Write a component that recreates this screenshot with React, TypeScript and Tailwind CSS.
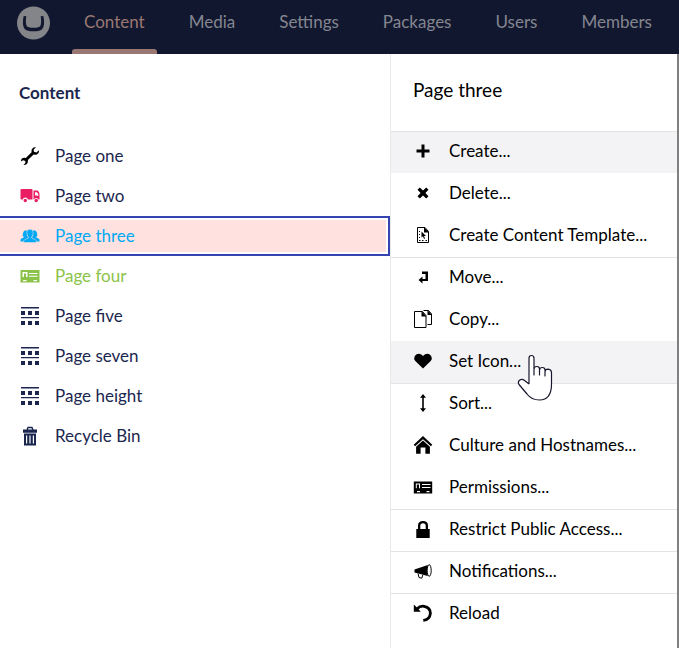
import type { ReactNode } from "react";

const navItems = ["Content", "Media", "Settings", "Packages", "Users", "Members"];

function Icon({ children }: { children: ReactNode }) {
  return (
    <svg viewBox="0 0 20 20" className="h-5 w-5 shrink-0" fill="currentColor" aria-hidden="true">
      {children}
    </svg>
  );
}

const wrench = (
  <Icon>
    <path d="M19 4.2 16.4 6.4 14 5.8 13.6 3.7 15.9 1.3C13.5.7 11.2 2.6 11.5 5.2L11.6 6.3 5.8 12 4.5 11.8C2.3 11.6.8 13.3 1 15.5L3.1 14.2 5.3 15 5.4 17 3.5 19C6 19.3 8 17.6 7.9 15.3L7.9 14 13.6 8.5 15 8.7C17.4 8.9 19.4 6.7 19 4.2Z" />
  </Icon>
);

const truck = (
  <Icon>
    <path d="M1.500 3H11.500Q12.500 3 12.500 4V13.500H7.900A2.600 2.600 0 0 0 2.800 13.500H1.500Q.500 13.500 .500 12.500V4Q.500 3 1.500 3Z" />
    <path fillRule="evenodd" d="M13.500 4.500H17.500Q19.500 5.500 19.500 8V13.500H18.600A2.600 2.600 0 0 0 13.800 13.500H13.500ZM15 6.300V9.300L18.300 10V8L17 6.300Z" />
    <circle cx="5.300" cy="14.500" r="1.700" />
    <circle cx="16.200" cy="14.500" r="1.700" />
  </Icon>
);

const users = (
  <Icon>
    <path d="M5 4.500Q7.300 3.800 7.500 6L7 9.200 8.300 11.400 4.500 15.500H.500V13.500Q1 12.600 3.700 11.500 4.300 10.800 2.600 9.800 3 5 5 4.500Z" />
    <path d="M15 4.500Q12.700 3.800 12.500 6L13 9.200 11.700 11.400 15.500 15.500H19.500V13.500Q19 12.600 16.300 11.500 15.700 10.800 17.400 9.800 17 5 15 4.500Z" />
    <path d="M10 3.300Q13.600 3.300 13.200 7L12.700 9.300 11.700 11.200V12L15.500 13.800Q16.500 14.400 16.500 16.500H3.500Q3.500 14.400 4.500 13.800L8.300 12V11.200L7.300 9.300 6.800 7Q6.400 3.300 10 3.300Z" stroke="#ffe2df" strokeWidth=".5" />
  </Icon>
);

const idCard = (
  <Icon>
    <path
      fillRule="evenodd"
      d="M.500 4H19.500V16.500H.500ZM2.500 6V11H4V7.500H6V11H7.500V6ZM9 7V8H17.500V7ZM9 9.700V10.700H17.500V9.700ZM3 14V15.300H6.500V14ZM13.500 14V15.300H17V14Z"
    />
  </Icon>
);

const grid = (
  <Icon>
    <path d="M1 1H19V2.500H1ZM1 5H5V9H1ZM8 5H12V9H8ZM15 5H19V9H15ZM1 11H19V12.300H1ZM1 15H5V19H1ZM8 15H12V19H8ZM15 15H19V19H15Z" />
  </Icon>
);

const trash = (
  <Icon>
    <path
      fillRule="evenodd"
      d="M3 3.500H6.500L7.500.800H12.500L13.500 3.500H17V6.700H3ZM8 3.500H12L11.600 2.300H8.400ZM4 7.500H16V19.500H4ZM6 9.500V17.500H7.200V9.500ZM9.400 9.500V17.500H10.600V9.500ZM12.800 9.500V17.500H14V9.500Z"
    />
  </Icon>
);

type Row = { label: string; icon: ReactNode; iconColor: string; textColor: string; selected?: boolean };

const pages: Row[] = [
  { label: "Page one", icon: wrench, iconColor: "text-black", textColor: "text-[#1b264f]" },
  { label: "Page two", icon: truck, iconColor: "text-[#e91e63]", textColor: "text-[#1b264f]" },
  { label: "Page three", icon: users, iconColor: "text-[#03a9f4]", textColor: "text-[#03a9f4]", selected: true },
  { label: "Page four", icon: idCard, iconColor: "text-[#8bc34a]", textColor: "text-[#8bc34a]" },
  { label: "Page five", icon: grid, iconColor: "text-[#1b264f]", textColor: "text-[#1b264f]" },
  { label: "Page seven", icon: grid, iconColor: "text-[#1b264f]", textColor: "text-[#1b264f]" },
  { label: "Page height", icon: grid, iconColor: "text-[#1b264f]", textColor: "text-[#1b264f]" },
  { label: "Recycle Bin", icon: trash, iconColor: "text-[#1b264f]", textColor: "text-[#1b264f]" },
];

type Action = { label: string; icon: ReactNode; divider?: boolean; shaded?: boolean; pointer?: boolean };

const actions: Action[] = [
  {
    label: "Create...",
    divider: true,
    shaded: true,
    icon: <path d="M8.500 3.500H11.500V8.500H16.500V11.500H11.500V16.500H8.500V11.500H3.500V8.500H8.500Z" />,
  },
  {
    label: "Delete...",
    icon: <path d="M4.500 6.800 6.800 4.500 10 7.600 13.200 4.500 15.500 6.800 12.400 10 15.500 13.200 13.200 15.500 10 12.400 6.800 15.500 4.500 13.200 7.600 10Z" />,
  },
  {
    label: "Create Content Template...",
    icon: (
      <>
        <path d="M4.500 2.500H12L15.500 6.500V17.500H4.500Z" fill="none" stroke="currentColor" strokeWidth="1" />
        <path d="M11 2V7.500H16ZM8.500 6.500V12.500L10 11.300 11 14 12 13.600 11 11H13ZM6 6H7V7H6ZM6 9H7V10H6ZM6 12H7V13H6ZM6 15H7.500V16H6ZM9 15H10.500V16H9ZM12.500 15H14V16H12.500Z" />
      </>
    ),
  },
  {
    label: "Move...",
    divider: true,
    icon: <path d="M9 4.500H15V14H9.500V16.500L5.500 13 9.500 9.500V12H12.500V7H9Z" />,
  },
  {
    label: "Copy...",
    icon: (
      <>
        <path d="M1.500 2.500H9.500L13 6.500V18.500H1.500Z M10.500 1.500H15.500L18.500 5V15.500H14.500" fill="none" stroke="currentColor" strokeWidth="1" />
        <path d="M8.500 2V7.500H13.500ZM14.500 1V6H19Z" />
      </>
    ),
  },
  {
    label: "Set Icon...",
    shaded: true,
    pointer: true,
    icon: <path d="M10 17.500 2.300 10Q.400 7.500 1.800 5 4.500 1.500 8.300 3.500L10 5 11.700 3.500Q15.500 1.500 18.200 5 19.600 7.500 17.700 10Z" />,
  },
  {
    label: "Sort...",
    divider: true,
    icon: <path d="M10 1 13 4.700H10.800V15.300H13L10 19 7 15.300H9.200V4.700H7Z" />,
  },
  {
    label: "Culture and Hostnames...",
    icon: (
      <>
        <path d="M10 1 19.300 9.800 17.900 11.300 10 4.200 2.100 11.300.700 9.800Z" />
        <path d="M10 5.600 16.900 11.800V18.700H12.400V12.500H7.600V18.700H3.100V11.800Z" />
      </>
    ),
  },
  {
    label: "Permissions...",
    icon: (
      <path
        fillRule="evenodd"
        d="M.800 4.500H19.200V16.500H.800ZM2.800 6.500V11.200H3.800V7.500H6V11.200H7V6.500ZM9 7V8H17.500V7ZM9 10V11H17.500V10ZM4 14V15.300H7V14ZM13.500 14V15.300H16.500V14Z"
      />
    ),
  },
  {
    label: "Restrict Public Access...",
    divider: true,
    icon: <path fillRule="evenodd" d="M3.300 10H5V6.500Q5 2 10 2T15 6.500V10H16.700V19H3.300ZM7.300 10H12.700V7Q12.700 4.200 10 4.200T7.300 7Z" />,
  },
  {
    label: "Notifications...",
    divider: true,
    icon: (
      <>
        <path d="M1.500 8.500 14.800 4Q13 9.500 14.800 15L1.500 11.500Z" />
        <ellipse cx="16.200" cy="9.500" rx="2" ry="5.800" fill="none" stroke="currentColor" strokeWidth="1" />
        <path d="M5 12.500 6 16.500 8.800 17.200 9.800 14" fill="none" stroke="currentColor" strokeWidth="1" />
      </>
    ),
  },
  {
    label: "Reload",
    divider: true,
    icon: (
      <>
        <path d="M4 6Q7 2.700 11 3.300 17.500 4.600 17.400 10.300 16.800 16.500 10.300 17.400" fill="none" stroke="currentColor" strokeWidth="2.800" />
        <path d="M.800 1.500 2.900 3.600 7.800 8.700H.800Z" />
      </>
    ),
  },
];

function HandCursor() {
  return (
    <svg viewBox="0 0 36 48" className="absolute top-3 left-[126px] z-10 h-12 w-9" aria-hidden="true">
      <path
        d="M12 31V5.500Q12 2.500 14.500 2.500T17 5.500V22V16.500Q17 13.500 19.800 13.500T22.500 16.500V22V17.500Q22.500 14.500 25.300 14.500T28 17.500V23V19Q28 16.200 31 16.200 34.500 16.500 34.500 20V31Q34.500 47 22.500 47 14.500 47 10 41L2 31.500Q.500 29 2.500 27.200 5 25.500 7.500 27.500L12 31"
        fill="white"
        stroke="#16162c"
        strokeWidth="1.200"
        strokeLinejoin="round"
      />
    </svg>
  );
}

export default function App() {
  return (
    <div className="flex min-h-screen flex-col bg-white font-['Lato',sans-serif] text-[17px] leading-6">
      <header className="flex h-[54px] items-stretch bg-[#11172f]">
        <a href="#home" aria-label="Home" className="flex w-[72px] items-center pb-2 pl-4">
          <svg viewBox="0 0 34 34" className="h-[34px] w-[34px]" aria-hidden="true">
            <circle cx="17.500" cy="17" r="16.500" fill="#848589" />
            <path
              d="M7.700 10Q5.700 18.500 8.700 23 10.700 25.300 17.500 25.300T26.300 23Q29.300 18.500 27.300 10L24.700 10.300Q25.800 17 24.300 20 23.300 21.800 17.500 21.800T10.700 20Q9.200 17 10.300 10.300Z"
              fill="#11172f"
            />
          </svg>
        </a>
        <nav className="flex gap-5">
          {navItems.map((item, i) => (
            <a
              key={item}
              href={`#${item.toLowerCase()}`}
              className={`relative flex items-center px-3 pb-2.5 ${i === 0 ? "text-[#9b7774]" : "text-[#84868f]"}`}
            >
              {item}
              {i === 0 && <span className="absolute inset-x-0 bottom-0 h-[5px] rounded-t-[3px] bg-[#9b7774]" />}
            </a>
          ))}
        </nav>
      </header>

      <main className="flex flex-1">
        <section className="flex-1">
          <h1 className="px-[19px] pt-[27px] pb-[31px] font-bold text-[#1b264f]">Content</h1>
          <ul>
            {pages.map((page) => (
              <li key={page.label}>
                <a
                  href="#page"
                  className={`flex h-10 items-center gap-[15px] border-y-2 border-r-2 pl-5 ${page.textColor} ${
                    page.selected
                      ? "border-[#3544b1] bg-[#ffe2df] shadow-[inset_-2px_0_white,inset_0_2px_white,inset_0_-2px_white]"
                      : "border-transparent"
                  }`}
                >
                  <span className={page.iconColor}>{page.icon}</span>
                  {page.label}
                </a>
              </li>
            ))}
          </ul>
        </section>

        <aside className="w-[287px] border-l border-[#e9e9eb] text-black">
          <h2 className="px-[22px] pt-6 pb-[29px] text-[19px]">Page three</h2>
          <ul>
            {actions.map((action) => (
              <li key={action.label} className="relative">
                <button
                  type="button"
                  className={`flex h-[42px] w-full items-center gap-4 border-t pb-1 pl-[22px] text-left ${
                    action.divider ? "border-[#e3e3e6]" : action.shaded ? "border-[#f3f3f5]" : "border-transparent"
                  } ${action.shaded ? "bg-[#f3f3f5]" : ""}`}
                >
                  <Icon>{action.icon}</Icon>
                  {action.label}
                </button>
                {action.pointer && <HandCursor />}
              </li>
            ))}
          </ul>
        </aside>
        <div className="w-0.5 bg-[#808080]" />
      </main>
    </div>
  );
}
